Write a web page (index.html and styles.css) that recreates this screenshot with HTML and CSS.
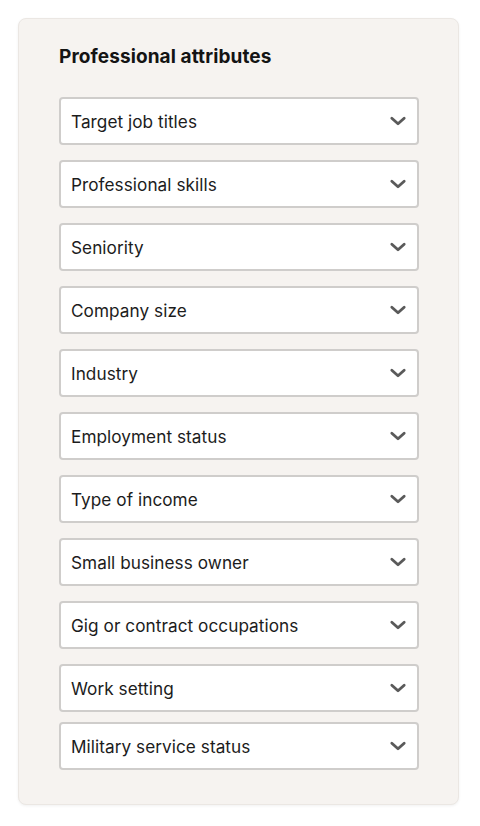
FILE: index.html
```html
<!DOCTYPE html>
<html lang="en">
<head>
    <meta charset="UTF-8">
    <meta name="viewport" content="width=device-width, initial-scale=1.0">
    <title>Professional attributes</title>
    <link rel="stylesheet" href="styles.css">
</head>
<body>
    <div class="panel">
        <h2 class="panel-title">Professional attributes</h2>

        <div class="filter-list">
            <div class="filter-select">
                <span class="filter-label">Target job titles</span>
                <svg class="chevron" viewBox="0 0 16 16"><path d="M2.5 5.5 L8 10.5 L13.5 5.5"/></svg>
            </div>
            <div class="filter-select">
                <span class="filter-label">Professional skills</span>
                <svg class="chevron" viewBox="0 0 16 16"><path d="M2.5 5.5 L8 10.5 L13.5 5.5"/></svg>
            </div>
            <div class="filter-select">
                <span class="filter-label">Seniority</span>
                <svg class="chevron" viewBox="0 0 16 16"><path d="M2.5 5.5 L8 10.5 L13.5 5.5"/></svg>
            </div>
            <div class="filter-select">
                <span class="filter-label">Company size</span>
                <svg class="chevron" viewBox="0 0 16 16"><path d="M2.5 5.5 L8 10.5 L13.5 5.5"/></svg>
            </div>
            <div class="filter-select">
                <span class="filter-label">Industry</span>
                <svg class="chevron" viewBox="0 0 16 16"><path d="M2.5 5.5 L8 10.5 L13.5 5.5"/></svg>
            </div>
            <div class="filter-select">
                <span class="filter-label">Employment status</span>
                <svg class="chevron" viewBox="0 0 16 16"><path d="M2.5 5.5 L8 10.5 L13.5 5.5"/></svg>
            </div>
            <div class="filter-select">
                <span class="filter-label">Type of income</span>
                <svg class="chevron" viewBox="0 0 16 16"><path d="M2.5 5.5 L8 10.5 L13.5 5.5"/></svg>
            </div>
            <div class="filter-select">
                <span class="filter-label">Small business owner</span>
                <svg class="chevron" viewBox="0 0 16 16"><path d="M2.5 5.5 L8 10.5 L13.5 5.5"/></svg>
            </div>
            <div class="filter-select">
                <span class="filter-label">Gig or contract occupations</span>
                <svg class="chevron" viewBox="0 0 16 16"><path d="M2.5 5.5 L8 10.5 L13.5 5.5"/></svg>
            </div>
            <div class="filter-select">
                <span class="filter-label">Work setting</span>
                <svg class="chevron" viewBox="0 0 16 16"><path d="M2.5 5.5 L8 10.5 L13.5 5.5"/></svg>
            </div>
        </div>

        <div class="filter-select filter-last">
            <span class="filter-label">Military service status</span>
            <svg class="chevron" viewBox="0 0 16 16"><path d="M2.5 5.5 L8 10.5 L13.5 5.5"/></svg>
        </div>
    </div>
</body>
</html>
```

FILE: styles.css
```css
* {
    margin: 0;
    padding: 0;
    box-sizing: border-box;
}

body {
    background: #ffffff;
    font-family: 'Inter', 'Liberation Sans', sans-serif;
    color: #1a1a1a;
    padding: 18px 21px 22px 18px;
}

.panel {
    width: 441px;
    background: #f6f3f0;
    border: 1px solid #ebe7e3;
    border-radius: 8px;
    box-shadow: 0 1px 3px rgba(0, 0, 0, 0.06);
    padding: 26px 39px 34px 40px;
}

.panel-title {
    font-size: 19px;
    font-weight: 700;
    color: #141414;
    line-height: 24px;
    margin-bottom: 28px;
    letter-spacing: 0.1px;
}

.filter-list {
    display: flex;
    flex-direction: column;
    gap: 15px;
}

.filter-select {
    height: 48px;
    background: #ffffff;
    border: 2px solid #cfcdcb;
    border-radius: 4px;
    display: flex;
    align-items: center;
    justify-content: space-between;
    padding: 0 10px 0 10px;
}

.filter-last {
    margin-top: 10px;
}

.filter-label {
    font-size: 17.2px;
    color: #1c1c1c;
    letter-spacing: 0.05px;
}

.chevron {
    width: 18px;
    height: 18px;
    fill: none;
    stroke: #5a5a5a;
    stroke-width: 2.5;
    stroke-linecap: round;
    stroke-linejoin: round;
}
```
